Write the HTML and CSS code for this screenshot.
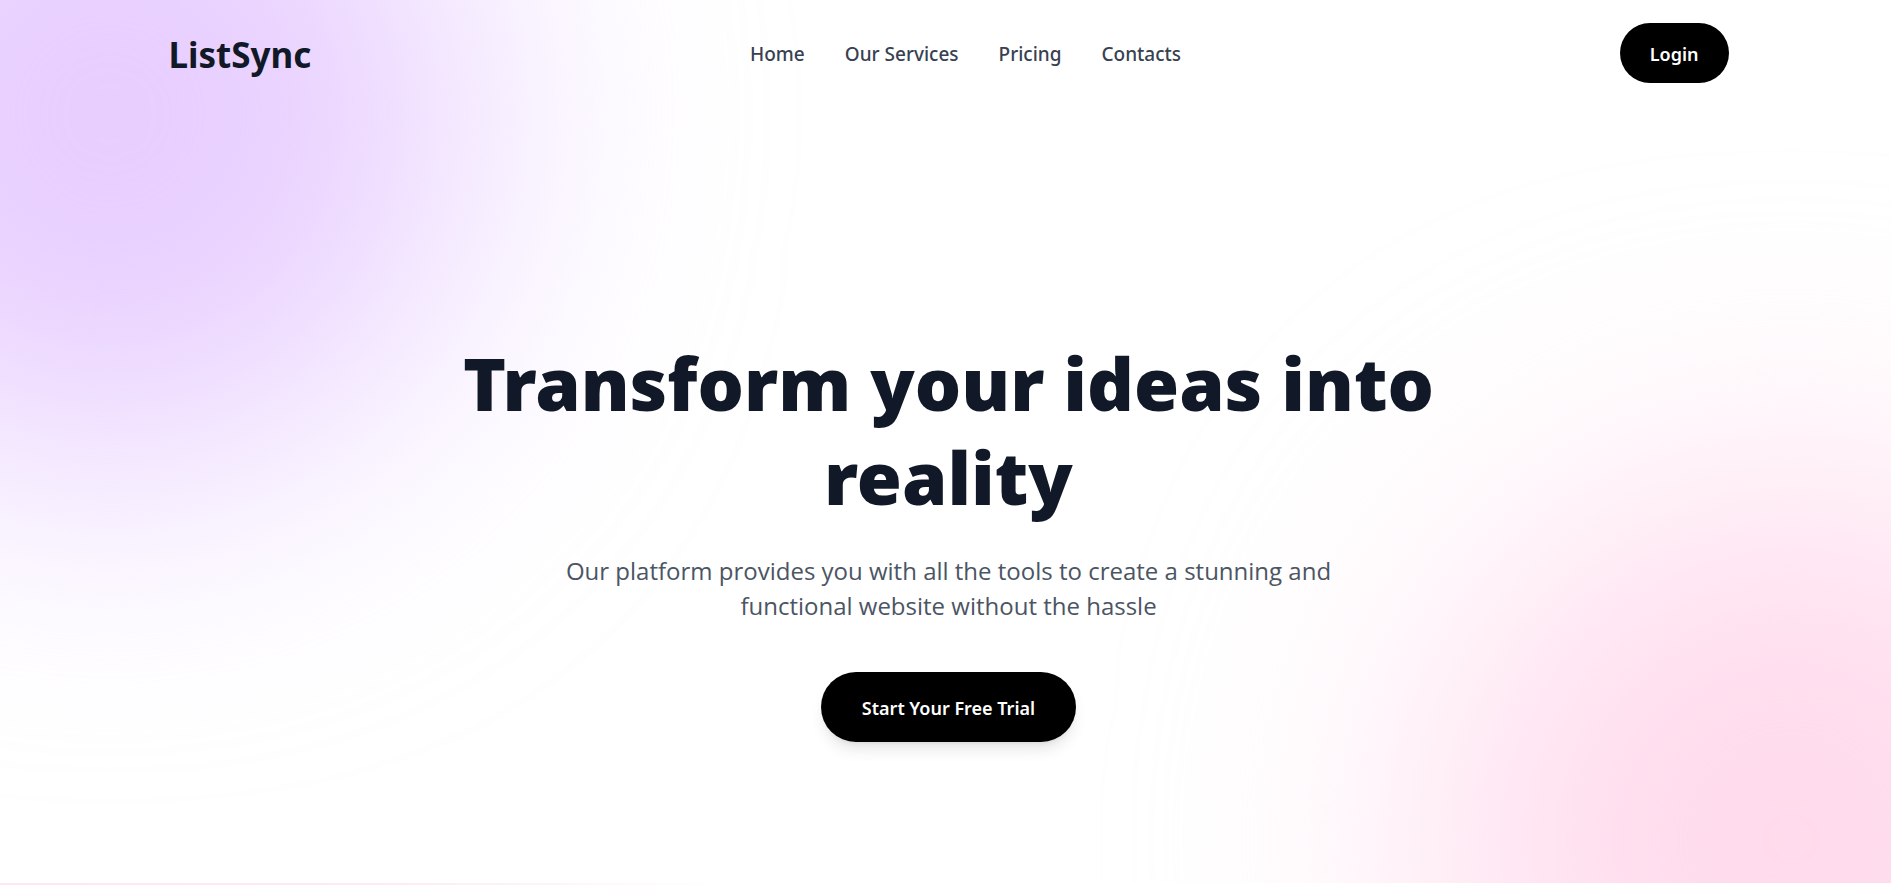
FILE: index.html
```html
<!DOCTYPE html>
<html lang="en">
<head>
<meta charset="utf-8">
<title>ListSync</title>
<link rel="stylesheet" href="styles.css">
</head>
<body>
<div class="page">
  <div class="glow glow-purple"></div>
  <div class="glow glow-pink"></div>
  <header class="header">
    <a class="logo" href="#">ListSync</a>
    <nav class="nav">
      <a href="#">Home</a>
      <a href="#">Our Services</a>
      <a href="#">Pricing</a>
      <a href="#">Contacts</a>
    </nav>
    <button class="button login">Login</button>
  </header>
  <main class="hero">
    <h1>Transform your ideas into reality</h1>
    <p>Our platform provides you with all the tools to create a stunning and functional website without the hassle</p>
    <button class="button trial">Start Your Free Trial</button>
  </main>
</div>
<div class="next-section"></div>
</body>
</html>
```

FILE: styles.css
```css
* { box-sizing: border-box; }
body {
  margin: 0;
  height: 100vh;
  overflow: hidden;
  display: flex;
  flex-direction: column;
  background: #fff;
  color: #111827;
  font-family: "Segoe UI", "Noto Sans", "Open Sans", sans-serif;
}
.page {
  position: relative;
  flex: 1;
  overflow: hidden;
  padding-left: 6px;
}
.glow {
  position: absolute;
  width: 720px;
  height: 720px;
  border-radius: 50%;
  filter: blur(144px);
}
.glow-purple { left: -250px; top: -246px; background: #e7cdff; }
.glow-pink { right: -260px; bottom: -316px; background: #ffdaec; }
.header {
  position: relative;
  display: flex;
  justify-content: space-between;
  align-items: center;
  max-width: 1560px;
  margin: 0 auto;
  padding: 23px 0;
}
.logo {
  padding-top: 4px;
  color: #111827;
  font-size: 35px;
  line-height: 44px;
  font-weight: 700;
  text-decoration: none;
}
.nav { display: flex; gap: 40px; padding-top: 2px; }
.nav a {
  color: #374151;
  font-size: 19px;
  font-weight: 500;
  text-decoration: none;
}
.button {
  border: 0;
  border-radius: 999px;
  background: #000;
  color: #fff;
  font-family: "Segoe UI", "Noto Sans", sans-serif;
  font-size: 18px;
  font-weight: 600;
}
.login { height: 60px; padding: 2px 30px 0; }
.hero {
  position: relative;
  display: flex;
  flex-direction: column;
  align-items: center;
  padding-top: 230px;
  text-align: center;
}
h1 {
  max-width: 1120px;
  margin: 0 0 29px;
  font-size: 73px;
  line-height: 94px;
  font-weight: 900;
}
p {
  max-width: 800px;
  margin: 0 0 49px;
  color: #4b5563;
  font-family: "Segoe UI", "Open Sans", sans-serif;
  font-size: 24px;
  line-height: 35px;
}
.trial {
  height: 70px;
  padding: 2px 41px 0;
  box-shadow: 0 10px 15px -3px rgba(0, 0, 0, .1), 0 4px 6px -4px rgba(0, 0, 0, .1);
}
.next-section {
  height: 2px;
  background: linear-gradient(90deg, #fde6f3 0%, #fdeaf4 20%, #fff 38%);
}
```
